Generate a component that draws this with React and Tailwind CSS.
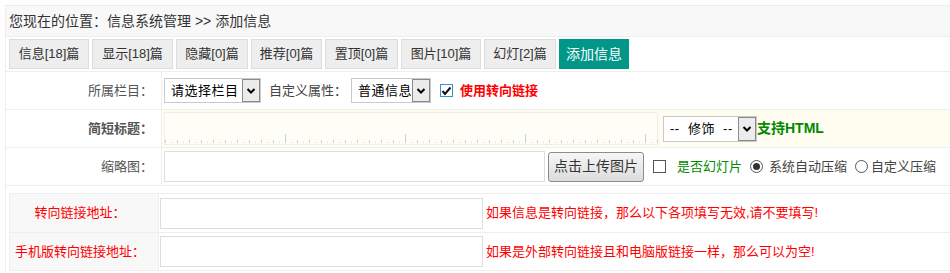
import React from "react";

const tabs = [
  { label: "信息[18]篇", w: "w-[80px]" },
  { label: "显示[18]篇", w: "w-[81px]" },
  { label: "隐藏[0]篇", w: "w-[72px]" },
  { label: "推荐[0]篇", w: "w-[71px]" },
  { label: "置顶[0]篇", w: "w-[73px]" },
  { label: "图片[10]篇", w: "w-[80px]" },
  { label: "幻灯[2]篇", w: "w-[72px]" },
];

function FakeSelect({ text, className }) {
  return (
    <div className={`flex items-stretch border border-[#c9c9c9] bg-white ${className}`}>
      <span className="flex-1 flex items-center pl-[6px] text-[13px] tracking-[0.5px] text-black whitespace-pre">
        {text}
      </span>
      <span className="w-[18px] shrink-0 flex items-center justify-center bg-[#ececec] border border-[#8a8a8a]">
        <svg width="10" height="8" viewBox="0 0 10 8">
          <path d="M1.5 2 L5 5.5 L8.5 2" fill="none" stroke="#000" strokeWidth="2" />
        </svg>
      </span>
    </div>
  );
}

function Ruler() {
  const ticks = [];
  for (let x = 0; x <= 494; x += 6) {
    let h = 3;
    if (x % 120 === 0 && x > 0) h = 11;
    else if (x % 12 === 0) h = 5;
    ticks.push(<line key={x} x1={x + 0.5} y1={32 - h} x2={x + 0.5} y2={30} stroke="#c9cde3" strokeWidth="1" />);
  }
  return (
    <svg className="absolute left-0 top-0" width="494" height="32">
      {ticks}
    </svg>
  );
}

function Radio({ checked }) {
  return (
    <span className="w-[13px] h-[13px] rounded-full border border-[#555] bg-white flex items-center justify-center">
      {checked && <span className="w-[7px] h-[7px] rounded-full bg-[#333]" />}
    </span>
  );
}

export default function App() {
  return (
    <div className="w-[950px] h-[273px] overflow-hidden bg-white pl-[5px] pt-[5px] font-['Liberation_Sans','Noto_Sans_CJK_SC',sans-serif] text-[13px] text-[#333]">
      <div className="h-[32px] bg-[#f8f8f8] border border-[#eee] border-r-0 flex items-center pl-[3px] text-[14px] text-[#333]">
        您现在的位置：信息系统管理 &gt;&gt; 添加信息
      </div>

      <div className="h-[34px] flex gap-[3px] pl-[3px] pt-[2px] border-l border-[#eee]">
        {tabs.map((t) => (
          <div
            key={t.label}
            className={`${t.w} h-[30px] flex items-center justify-center bg-[#eee] border border-[#ddd] text-[13px] text-[#333]`}
          >
            {t.label}
          </div>
        ))}
        <div className="w-[70px] h-[30px] flex items-center justify-center bg-[#009688] text-white text-[14px]">
          添加信息
        </div>
      </div>

      <div className="border-l border-t border-[#eee]">
        <div className="h-[38px] flex border-b border-[#eee]">
          <div className="w-[156px] flex items-center justify-end pr-[8px] border-r border-[#eee] text-[#555]">
            所属栏目：
          </div>
          <div className="flex-1 flex items-center pl-[2px]">
            <FakeSelect text="请选择栏目" className="w-[97px] h-[25px]" />
            <span className="ml-[8px] text-[#444]">自定义属性：</span>
            <FakeSelect text="普通信息" className="ml-[4px] w-[80px] h-[25px]" />
            <span className="ml-[9px] w-[13px] h-[13px] border border-[#3b8ed8] bg-white flex items-center justify-center">
              <svg width="11" height="10" viewBox="0 0 11 10">
                <path d="M1.5 5 L4 8 L9.5 1.5" fill="none" stroke="#111" strokeWidth="2" />
              </svg>
            </span>
            <span className="ml-[7px] font-bold text-[#f00]">使用转向链接</span>
          </div>
        </div>

        <div className="h-[38px] flex border-b border-[#eee]">
          <div className="w-[156px] flex items-center justify-end pr-[8px] border-r border-[#eee] font-bold text-[#555]">
            简短标题：
          </div>
          <div className="flex-1 flex items-center pl-[2px] bg-[#fffdf0]">
            <div className="relative w-[494px] h-[33px] border border-[#eee] bg-[#fffef6]">
              <Ruler />
            </div>
            <FakeSelect text="--  修饰  --" className="ml-[5px] w-[94px] h-[26px]" />
            <span className="font-bold text-[14px] text-[#080]">支持HTML</span>
          </div>
        </div>

        <div className="h-[38px] flex border-b border-[#eee]">
          <div className="w-[156px] flex items-center justify-end pr-[8px] border-r border-[#eee] text-[#555]">
            缩略图：
          </div>
          <div className="flex-1 flex items-center pl-[2px]">
            <div className="w-[381px] h-[31px] border border-[#ddd] bg-white" />
            <div className="ml-[3px] w-[96px] h-[30px] flex items-center justify-center rounded-[3px] border border-[#8c8c8c] bg-gradient-to-b from-[#f6f6f6] to-[#dcdcdc] text-[14px] text-[#333]">
              点击上传图片
            </div>
            <span className="ml-[9px] w-[13px] h-[13px] border border-[#555] bg-white" />
            <span className="ml-[11px] text-[#080]">是否幻灯片</span>
            <span className="ml-[8px]">
              <Radio checked />
            </span>
            <span className="ml-[6px] text-[#444]">系统自动压缩</span>
            <span className="ml-[8px]">
              <Radio />
            </span>
            <span className="ml-[3px] text-[#444]">自定义压缩</span>
          </div>
        </div>

        <div className="pl-[3px] pt-[7px]">
          <div className="border border-[#eee] border-r-0">
            <div className="h-[39px] flex border-b border-[#eee]">
              <div className="w-[149px] flex items-center justify-center pr-[8px] bg-[#f8f8f8] border-r border-[#eee] text-[#f00]">
                转向链接地址：
              </div>
              <div className="flex-1 flex items-center pl-[1px]">
                <div className="w-[323px] h-[31px] border border-[#ddd] bg-white" />
                <span className="ml-[3px] text-[#f00]">如果信息是转向链接，那么以下各项填写无效,请不要填写!</span>
              </div>
            </div>
            <div className="h-[37px] flex">
              <div className="w-[149px] flex items-center justify-center pr-[8px] bg-[#f8f8f8] border-r border-[#eee] text-[#f00]">
                手机版转向链接地址：
              </div>
              <div className="flex-1 flex items-center pl-[1px]">
                <div className="w-[323px] h-[31px] border border-[#ddd] bg-white" />
                <span className="ml-[3px] text-[#f00]">如果是外部转向链接且和电脑版链接一样，那么可以为空!</span>
              </div>
            </div>
          </div>
        </div>
      </div>
    </div>
  );
}
